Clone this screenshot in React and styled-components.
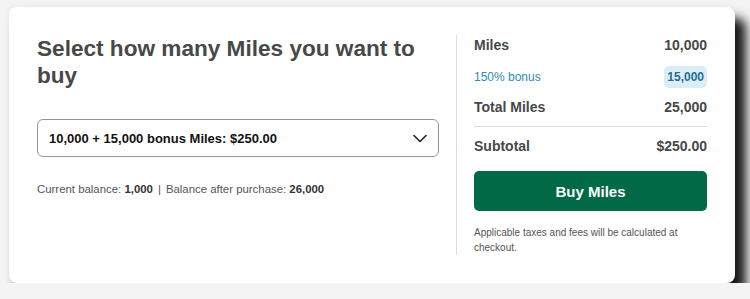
import React from 'react'
import styled, { createGlobalStyle } from 'styled-components'

const GlobalStyle = createGlobalStyle`
  html, body {
    margin: 0;
    padding: 0;
    background: #f4f4f4;
  }
  body {
    font-family: "Liberation Sans", Arial, sans-serif;
    padding: 7px 0 0 9px;
  }
`

const Card = styled.div`
  width: 726px;
  box-sizing: border-box;
  background: #fff;
  border-radius: 8px;
  padding: 28px;
  display: flex;
  box-shadow: 10px 12px 11px 1px rgba(0, 0, 0, 0.9), 0 0 8px rgba(0, 0, 0, 0.05);
`

const Left = styled.div`
  width: 402px;
  margin-right: 17px;
`

const Heading = styled.h2`
  margin: 0;
  font-size: 22.6px;
  line-height: 27px;
  font-weight: 700;
  color: #484848;
`

const SelectBox = styled.div`
  margin-top: 30px;
  height: 38px;
  box-sizing: border-box;
  border: 1px solid #8c97a3;
  border-radius: 6px;
  display: flex;
  align-items: center;
  justify-content: space-between;
  padding: 0 11px;
  font-size: 13px;
  font-weight: 700;
  color: #111;
`

const Balance = styled.p`
  margin: 24px 0 0;
  font-size: 11.4px;
  line-height: 16px;
  color: #555;

  b {
    color: #333;
  }
`

const Sep = styled.span`
  margin: 0 5px;
`

const Right = styled.div`
  flex: 1;
  border-left: 1px solid #dcdcdc;
  padding-left: 17px;
  display: flex;
  flex-direction: column;
`

const Row = styled.div`
  display: flex;
  justify-content: space-between;
  align-items: center;
  height: ${p => (p.$tall ? 22 : 20)}px;
  margin-top: ${p => p.$mt || 0}px;
  font-size: ${p => (p.$small ? 12 : 14)}px;
  font-weight: ${p => (p.$small ? 400 : 700)};
  color: ${p => (p.$small ? '#2e8bb4' : '#474747')};
`

const Badge = styled.span`
  background: #dcedf5;
  color: #1f6f96;
  font-weight: 700;
  font-size: 12px;
  border-radius: 5px;
  height: 22px;
  line-height: 22px;
  padding: 0 3px;
`

const Rule = styled.hr`
  border: 0;
  border-top: 1px solid #dcdcdc;
  margin: 9px 0 0;
`

const BuyButton = styled.button`
  margin-top: 15px;
  height: 40px;
  border: 0;
  border-radius: 5px;
  background: #006946;
  color: #fff;
  font-family: inherit;
  font-size: 15px;
  font-weight: 700;
  cursor: pointer;
`

const Note = styled.p`
  margin: 14px 0 0;
  font-size: 10px;
  line-height: 15px;
  color: #555;
`

const Chevron = () => (
  <svg width="14" height="9" viewBox="0 0 14 9" fill="none">
    <path d="M1 1.5l6 6 6-6" stroke="#222" strokeWidth="1.6" strokeLinecap="round" strokeLinejoin="round" />
  </svg>
)

export default function App() {
  return (
    <>
      <GlobalStyle />
      <Card>
        <Left>
          <Heading>Select how many Miles you want to buy</Heading>
          <SelectBox>
            <span>10,000 + 15,000 bonus Miles: $250.00</span>
            <Chevron />
          </SelectBox>
          <Balance>
            Current balance: <b>1,000</b>
            <Sep>|</Sep>
            Balance after purchase: <b>26,000</b>
          </Balance>
        </Left>
        <Right>
          <Row>
            <span>Miles</span>
            <span>10,000</span>
          </Row>
          <Row $small $tall $mt={11}>
            <span>150% bonus</span>
            <Badge>15,000</Badge>
          </Row>
          <Row $mt={9}>
            <span>Total Miles</span>
            <span>25,000</span>
          </Row>
          <Rule />
          <Row $mt={9}>
            <span>Subtotal</span>
            <span>$250.00</span>
          </Row>
          <BuyButton>Buy Miles</BuyButton>
          <Note>Applicable taxes and fees will be calculated at checkout.</Note>
        </Right>
      </Card>
    </>
  )
}
